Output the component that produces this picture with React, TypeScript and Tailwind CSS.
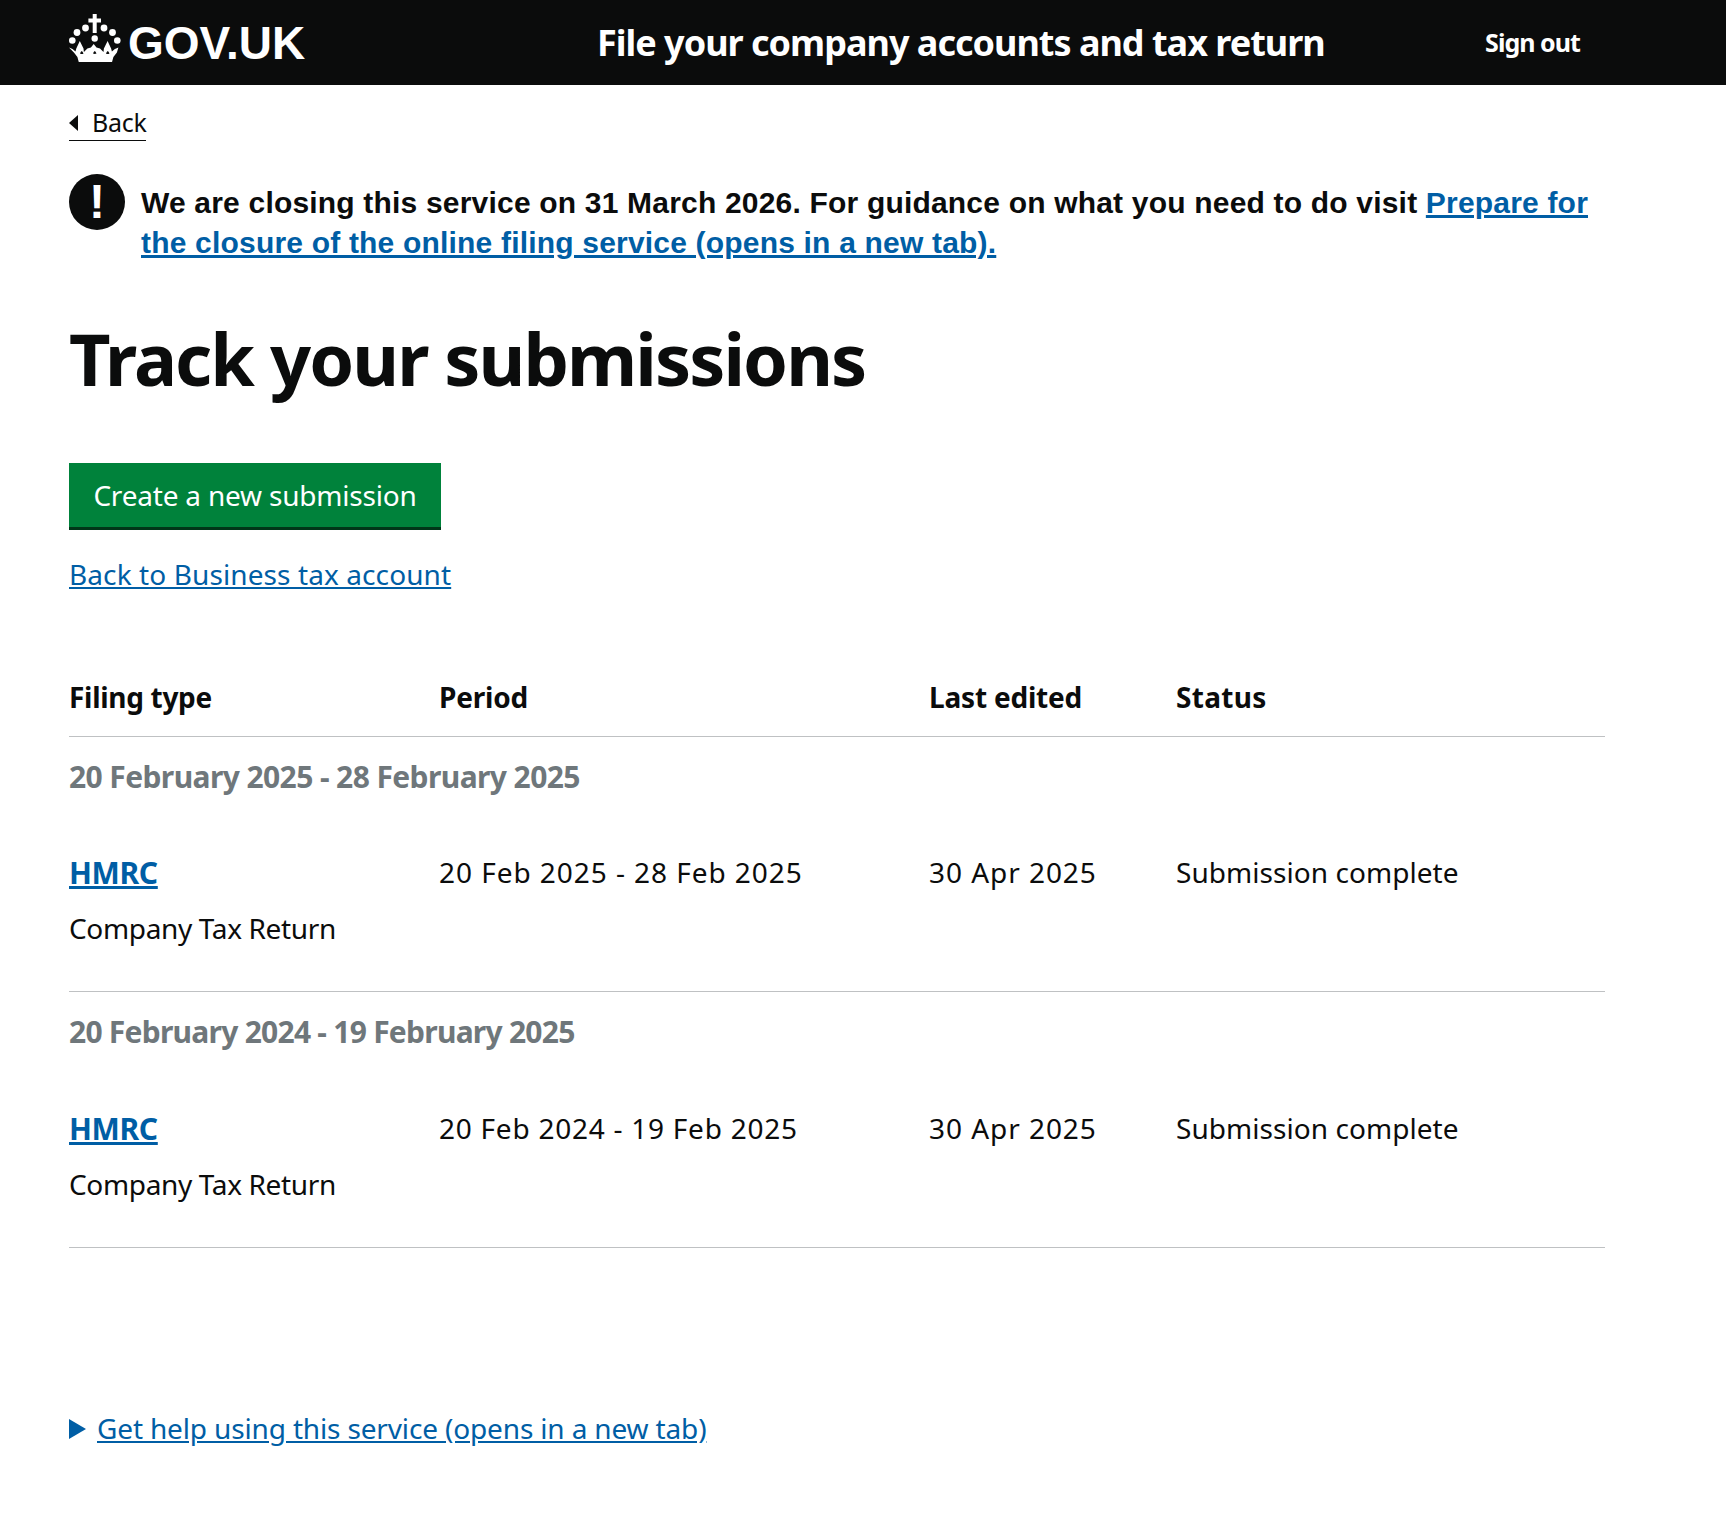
const rows = [
  {
    group: '20 February 2025 - 28 February 2025',
    groupClass: 'h-[80px] text-[#6f777b] font-bold text-[30px] tracking-[-0.6px]',
    period: '20 Feb 2025 - 28 Feb 2025',
    periodClass: 'pt-[36px] leading-[40px] tracking-[0.95px]',
  },
  {
    group: '20 February 2024 - 19 February 2025',
    groupClass: 'h-[80px] text-[#6f777b] font-bold text-[30px] tracking-[-0.75px]',
    period: '20 Feb 2024 - 19 Feb 2025',
    periodClass: 'pt-[36px] leading-[40px] tracking-[0.75px]',
  },
];

const Crown = () => (
  <svg viewBox="0 0 52 48" className="w-[52px] h-[48px] shrink-0 mb-[9px]" fill="white">
    {/* cross and the arc of pearls */}
    <path d="M23.700 0h4v4.500h4.300v4h-4.300v10.500h-4V8.500h-4.300v-4h4.300z" />
    <circle cx="25.700" cy="24.500" r="3.200" />
    <circle cx="16.500" cy="14" r="3.400" />
    <circle cx="35" cy="14" r="3.400" />
    <circle cx="8" cy="18.500" r="3.400" />
    <circle cx="43.500" cy="18.500" r="3.400" />
    <circle cx="3.300" cy="26.500" r="3.300" />
    <circle cx="48.300" cy="26.500" r="3.300" />
    {/* body with its points */}
    <path d="M0 33.500l3.500 1.500 3 2.500.8-3 3.500-7.500 3.700 7.500.4 3.500 3.500-3.500 3.500-1 2.800-3.500 2.800 3.500 3.500 1 3.500 3.500.4-3.500 3.700-7.500 3.500 7.500.8 3 3-2.500 3.500-1.500-1.500 5-3.500 4.500-1.500 5.500c-10 1.800-22 1.800-33 0l-1.500-5.500-3.500-4.500z" />
    <path d="M11 39.500c1.300.8 2.500.8 3.500 0-.5-1.300-1-2-1.700-2.500-.8.500-1.300 1.200-1.800 2.500zM24 39.500c1.200.6 2.400.6 3.500 0-.5-1.300-1-2-1.700-2.500-.8.500-1.300 1.200-1.800 2.500zM37 39.500c1 .8 2.200.8 3.500 0-.5-1.300-1-2-1.700-2.500-.8.500-1.300 1.200-1.800 2.500z" fill="#0b0c0c" />
  </svg>
);

export default function App() {
  return (
    <div className="min-h-[1524px] bg-white text-[#0b0c0c] font-['Noto_Sans',sans-serif]">
      <header className="h-[85px] bg-[#0b0c0c] text-white flex items-center pl-[69px] pr-[146px]">
        <div className="w-[528px] flex items-center gap-[7px]">
          <Crown />
          <span className="font-['Liberation_Sans',sans-serif] font-bold text-[46px] leading-none">GOV.UK</span>
        </div>
        <div className="flex-1 text-[36px] font-bold tracking-[-1px]">File your company accounts and tax return</div>
        <a className="text-[25px] font-bold tracking-[-0.95px]">Sign out</a>
      </header>

      <main className="px-[69px]">
        <a className="mt-[21px] inline-flex items-center h-[35px] border-b border-[#0b0c0c] text-[25px] tracking-[-0.3px]">
          <span className="w-0 h-0 mr-[14px] border-y-[8px] border-y-transparent border-r-[9px] border-r-[#0b0c0c]" />
          Back
        </a>

        <div className="mt-[33px] flex gap-[16px]">
          <div className="w-[56px] h-[56px] rounded-full bg-[#0b0c0c] text-white flex items-center justify-center shrink-0 font-['Liberation_Sans',sans-serif] text-[48px] font-bold leading-none">!</div>
          <p className="w-[1480px] pt-[9px] font-['Liberation_Sans',sans-serif] font-bold text-[30px] leading-[40px] tracking-[0.19px]">
            We are closing this service on 31 March 2026. For guidance on what you need to do visit{' '}
            <a className="text-[#005ea5] underline">Prepare for the closure of the online filing service (opens in a new tab).</a>
          </p>
        </div>

        <h1 className="mt-[55px] text-[72px] font-bold leading-[80px] tracking-[-1.9px]">Track your submissions</h1>

        <button className="mt-[65px] block w-[372px] h-[67px] bg-[#00823b] border-b-[3px] border-[#003618] text-white text-[28px] tracking-[-0.2px]">Create a new submission</button>

        <a className="mt-[24px] block w-fit text-[#005ea5] underline text-[28px] leading-[40px] tracking-[0.1px]">Back to Business tax account</a>

        <table className="mt-[64px] w-[1536px] table-fixed border-collapse text-[28px] tracking-[-0.35px]">
          <thead>
            <tr className="border-b border-[#bfc1c3] h-[78px] text-left">
              <th className="w-[370px] font-bold tracking-[-0.3px]">Filing type</th>
              <th className="w-[490px] font-bold tracking-[-0.2px]">Period</th>
              <th className="w-[247px] font-bold tracking-[-0.2px]">Last edited</th>
              <th className="font-bold tracking-[0.3px]">Status</th>
            </tr>
          </thead>
          {rows.map((row) => (
            <tbody key={row.group}>
              <tr>
                <td colSpan={4} className={row.groupClass}>{row.group}</td>
              </tr>
              <tr className="border-b border-[#bfc1c3] align-top">
                <td className="pt-[37px] pb-[43px] leading-[40px]">
                  <a className="block text-[#005ea5] underline font-bold text-[30px]">HMRC</a>
                  <span className="block mt-[15px]">Company Tax Return</span>
                </td>
                <td className={row.periodClass}>{row.period}</td>
                <td className="pt-[36px] leading-[40px] tracking-[0.95px]">30 Apr 2025</td>
                <td className="pt-[36px] leading-[40px] tracking-[0.05px]">Submission complete</td>
              </tr>
            </tbody>
          ))}
        </table>

        <div className="mt-[160px] flex items-center gap-[11px]">
          <span className="w-0 h-0 border-y-[10px] border-y-transparent border-l-[17px] border-l-[#005ea5]" />
          <a className="pb-[2px] text-[#005ea5] underline text-[28px] leading-[40px] tracking-[-0.15px]">Get help using this service (opens in a new tab)</a>
        </div>
      </main>
    </div>
  );
}
